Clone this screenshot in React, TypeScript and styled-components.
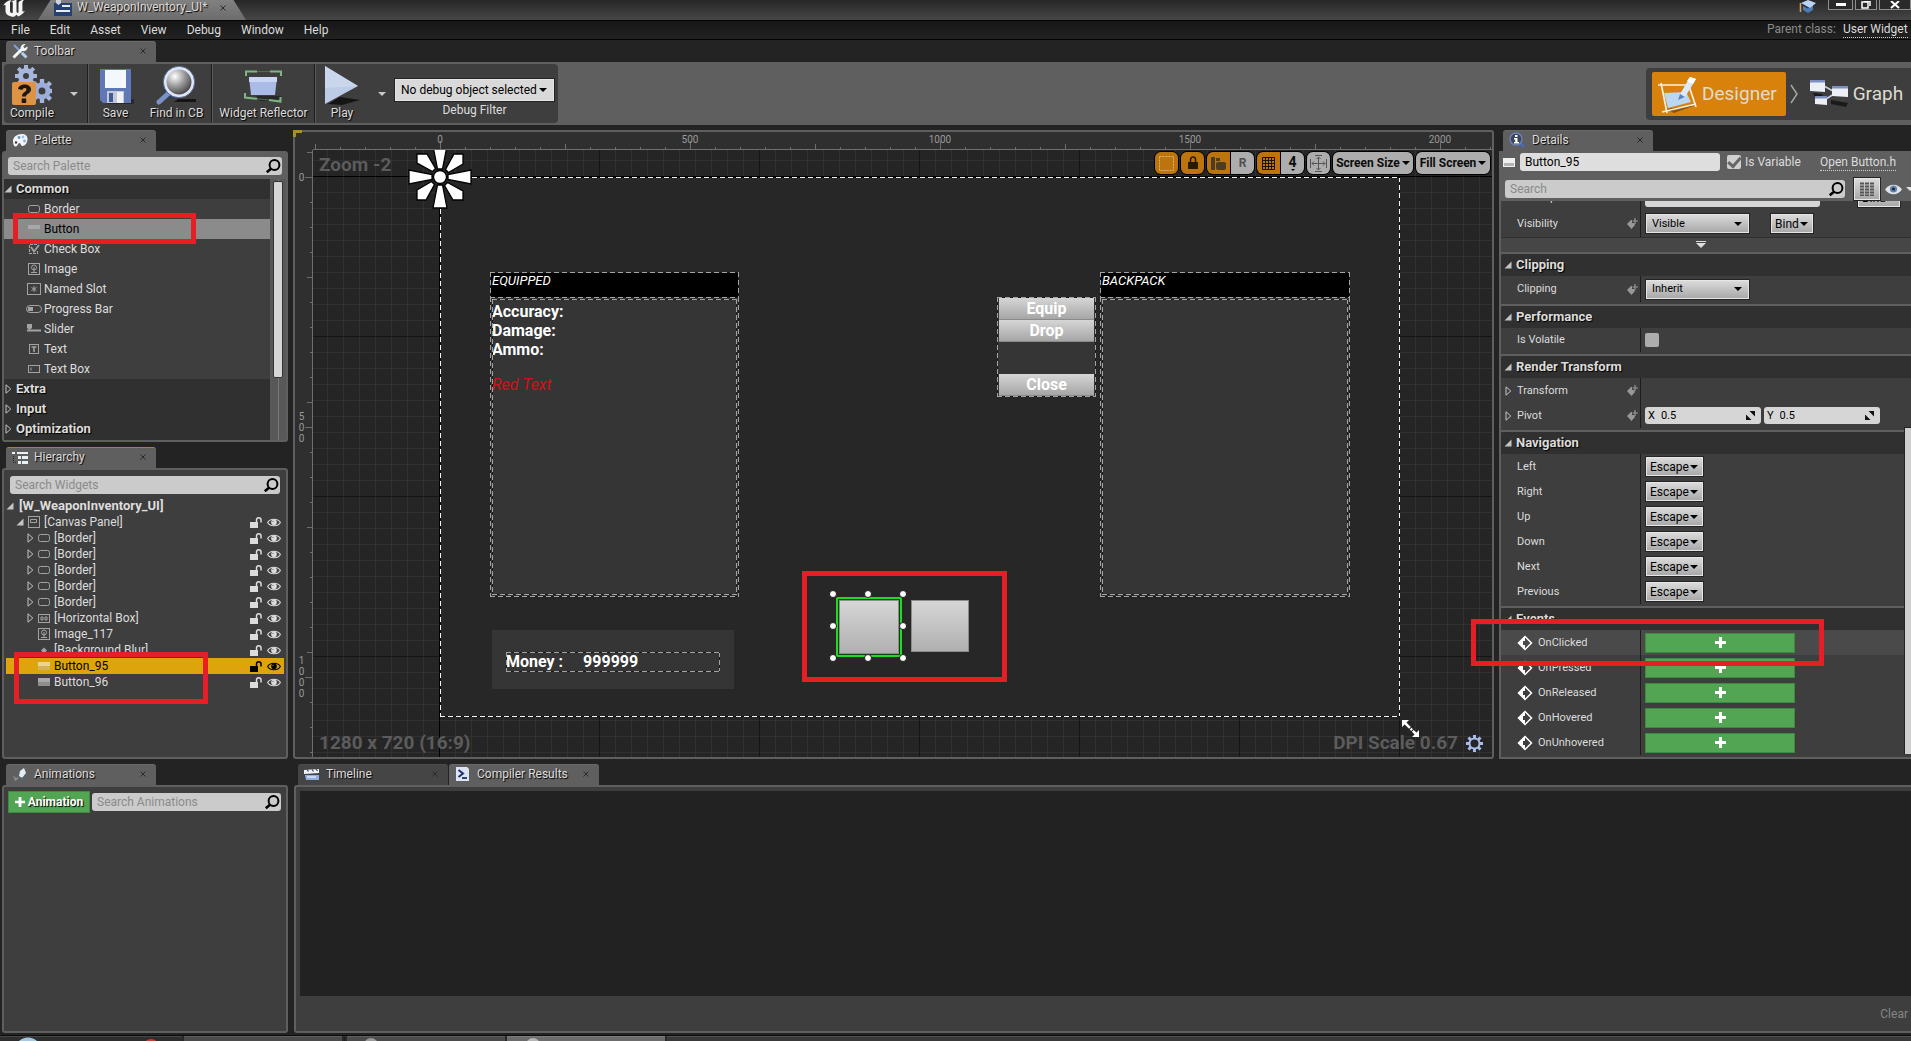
import React from "react";
import styled, { createGlobalStyle, css } from "styled-components";

/* ---------- theme values ---------- */

const c = {
  back: "#232323",
  frame: "#5f5f5f",
  panel: "#3e3e3e",
  header: "#303030",
  text: "#dcdcdc",
  dim: "#8c8c8c",
  input: "#cbcbcb",
  green: "#52a653",
  orange: "#d9820b",
  select: "#dda40c",
  mark: "#e61e25",
};

const Global = createGlobalStyle`
  * { box-sizing: border-box; }
  html, body { margin: 0; height: 100%; background: ${c.back}; }
  body, button, input, select {
    font-family: Roboto, "Liberation Sans", sans-serif;
    font-size: 12px;
    line-height: 16px;
    color: ${c.text};
  }
  button, input, select { margin: 0; padding: 0; border: 0; background: none; border-radius: 0; }
  ul { list-style: none; margin: 0; padding: 0; }
  h2 { margin: 0; font-size: inherit; }
  svg { display: block; flex: none; }
`;

const shadow = css`text-shadow: 1px 1px 1px #000;`;
const raised = css`
  background: linear-gradient(#dadada, #a9a9a9);
  border: 1px solid #e6e6e6;
  box-shadow: 0 0 0 1px #242424;
  color: #000;
`;

/* ---------- shell ---------- */

const Shell = styled.div`
  display: flex;
  flex-direction: column;
  height: 100vh;
  overflow: hidden;
  background: ${c.back};
`;

const TitleBar = styled.header`
  display: flex;
  justify-content: space-between;
  flex: none;
  height: 21px;
  padding-left: 2px;
  background: linear-gradient(#272727, #464646);
  border-bottom: 1px solid #050505;
`;

const TitleLeft = styled.div`
  display: flex;
  gap: 12px;
`;

const DocTab = styled.div`
  display: flex;
  align-items: flex-start;
  gap: 5px;
  width: 208px;
  height: 20px;
  padding: 0 18px 0 16px;
  background: linear-gradient(#818181, #6c6c6c);
  clip-path: polygon(6% 0, 94% 0, 100% 100%, 0 100%);
  line-height: 14px;
  ${shadow}
  span { flex: 1; }
`;

const WindowControls = styled.div`
  display: flex;
  align-items: flex-start;
  gap: 2px;
`;

const WinButton = styled.button<{ $w: number }>`
  display: grid;
  place-items: center;
  width: ${(p) => p.$w}px;
  height: 10px;
  background: #2a2a2a;
  border: 1px solid #8f8f8f;
  border-top: 0;
`;

const CapIcon = styled.span`margin-right: 10px;`;

const MenuBar = styled.nav`
  display: flex;
  align-items: center;
  flex: none;
  height: 19px;
  padding-left: 1px;
  background: linear-gradient(#161616, #222);
  border-bottom: 1px solid #050505;
`;

const MenuItem = styled.button`
  padding: 0 10px;
  height: 18px;
`;

const ParentClass = styled.div`
  display: flex;
  gap: 7px;
  margin-left: auto;
  width: 144px;
  overflow: hidden;
  white-space: nowrap;
  color: ${c.dim};
  line-height: 15px;
`;

const DottedLink = styled.a`
  color: ${c.text};
  text-decoration: none;
  border-bottom: 1px dotted #d0d0d0;
  white-space: nowrap;
`;

/* ---------- tabs and panels ---------- */

const TabStrip = styled.div`
  display: flex;
  gap: 1px;
  height: 21px;
  flex: none;
  padding-left: 4px;
`;

const Tab = styled.div<{ $idle?: boolean; $focus?: boolean }>`
  display: flex;
  align-items: center;
  gap: 6px;
  width: 150px;
  padding: 0 8px 2px 6px;
  background: ${(p) => (p.$idle ? "#454545" : c.frame)};
  border-top: 1px solid ${(p) => (p.$focus ? "#a08a28" : p.$idle ? "#4c4c4c" : "#696969")};
  border-radius: 3px 3px 0 0;
  ${shadow}
  span { flex: 1; }
`;

const CloseButton = styled.button`
  width: 10px;
  height: 16px;
  display: grid;
  place-items: center;
`;

const Panel = styled.section<{ $h?: number }>`
  position: relative;
  display: flex;
  flex-direction: column;
  ${(p) => (p.$h ? `height: ${p.$h}px; flex: none;` : "flex: 1; min-height: 0;")}
`;

const PanelBody = styled.div<{ $pad?: string }>`
  display: flex;
  flex-direction: column;
  flex: 1;
  min-height: 0;
  background: ${c.panel};
  border: 2px solid ${c.frame};
  border-radius: 3px;
  padding: ${(p) => p.$pad ?? "0"};
`;

const Marker = styled.div<{ $x: number; $y: number; $w: number; $h: number }>`
  position: absolute;
  left: ${(p) => p.$x}px;
  top: ${(p) => p.$y}px;
  width: ${(p) => p.$w}px;
  height: ${(p) => p.$h}px;
  border: 5px solid ${c.mark};
  pointer-events: none;
  z-index: 5;
`;

/* ---------- toolbar ---------- */

const ToolbarArea = styled.div`
  flex: none;
  padding: 1px 0 5px 2px;
`;

const ToolbarBar = styled.div`
  display: flex;
  justify-content: space-between;
  height: 63px;
  padding: 2px 0 2px 2px;
  background: ${c.frame};
`;

const ToolGroup = styled.div`
  display: flex;
  background: ${c.panel};
  border-radius: 4px;
`;

const ToolDivider = styled.div`
  width: 2px;
  background: #5a5a5a;
  border-left: 1px solid #1e1e1e;
`;

const ToolButton = styled.button<{ $w: number }>`
  display: flex;
  flex-direction: column;
  align-items: center;
  width: ${(p) => p.$w}px;
  padding-top: 1px;
  white-space: nowrap;
  ${shadow}
`;

const CaretButton = styled.button`
  width: 27px;
  display: grid;
  place-items: center;
`;

const DebugFilter = styled.div`
  display: flex;
  flex-direction: column;
  align-items: center;
  gap: 1px;
  width: 163px;
  padding: 15px 4px 0 0;
`;

const SelectBox = styled.span<{ $w?: number; $h: number; $flat?: boolean; $small?: boolean }>`
  position: relative;
  display: block;
  width: ${(p) => (p.$w ? `${p.$w}px` : "100%")};
  height: ${(p) => p.$h}px;
  ${raised}
  ${(p) => p.$flat && "background: #d9d9d9;"}
  select {
    width: 100%;
    height: 100%;
    padding-left: 5px;
    appearance: none;
    color: #000;
    font-size: ${(p) => (p.$small ? 11 : 12)}px;
  }
  svg { position: absolute; right: 6px; top: 50%; margin-top: -2px; pointer-events: none; }
`;

const Modes = styled.div`
  display: flex;
  align-items: center;
  gap: 4px;
  width: 265px;
  height: 52px;
  margin: 4px 0;
  padding-left: 6px;
  background: ${c.panel};
  border-radius: 4px 0 0 4px;
`;

const ModeButton = styled.button<{ $on?: boolean }>`
  display: flex;
  align-items: center;
  gap: 4px;
  height: 44px;
  padding: 0 9px 0 6px;
  border-radius: 2px;
  background: ${(p) => (p.$on ? c.orange : "none")};
  font-size: 19px;
  line-height: 24px;
  color: #dedbd2;
`;

/* ---------- workspace ---------- */

const Workspace = styled.main`
  display: grid;
  grid-template-columns: 286px minmax(0, 1fr) 412px;
  grid-template-rows: minmax(0, 1fr);
  gap: 5px;
  flex: 1;
  min-height: 0;
  padding-left: 2px;
`;

const Column = styled.div`
  display: flex;
  flex-direction: column;
  gap: 5px;
  min-height: 0;
`;

const SearchField = styled.label<{ $m?: string }>`
  display: flex;
  align-items: center;
  flex: 1;
  height: 18px;
  min-height: 18px;
  max-height: 18px;
  margin: ${(p) => p.$m ?? "0"};
  padding: 0 1px 0 5px;
  background: ${c.input};
  border-radius: 3px;
  input { flex: 1; min-width: 0; height: 18px; color: #222; outline: none; }
  input::placeholder { color: #8a8a8a; opacity: 1; }
`;

const PaletteTop = styled.div`
  display: flex;
  padding: 4px;
  background: ${c.frame};
`;

const PaletteScroll = styled.div`
  display: flex;
  flex: 1;
  min-height: 0;
`;

const PaletteList = styled.ul`
  flex: 1;
  background: ${c.header};
`;

const Gutter = styled.div`
  width: 16px;
  padding: 2px 3px;
  background: linear-gradient(90deg, transparent 8px, #787878 8px 9px, transparent 9px) #585858;
`;

const Thumb = styled.div<{ $h: number }>`
  height: ${(p) => p.$h}px;
  border-radius: 2px;
  background: #d6d6d6;
  border: 1px solid #333;
`;

const PaletteHead = styled.button`
  display: flex;
  align-items: center;
  gap: 4px;
  width: 100%;
  height: 20px;
  font-size: 13px;
  font-weight: 700;
  ${shadow}
`;

const PaletteItem = styled.button<{ $on?: boolean }>`
  display: flex;
  align-items: center;
  gap: 2px;
  width: 100%;
  height: 20px;
  padding-left: 22px;
  background: ${(p) => (p.$on ? "#8b8b8b" : c.panel)};
  color: ${(p) => (p.$on ? "#000" : c.text)};
`;

const TreeRow = styled.li<{ $indent: number; $on?: boolean; $root?: boolean }>`
  display: flex;
  align-items: center;
  gap: ${(p) => (p.$root ? 5 : 2)}px;
  height: 16px;
  margin: 0 2px;
  padding: 0 2px 0 ${(p) => p.$indent}px;
  background: ${(p) => (p.$on ? c.select : "none")};
  color: ${(p) => (p.$on ? "#000" : c.text)};
  font-size: ${(p) => (p.$root ? 13 : 12)}px;
  font-weight: ${(p) => (p.$root ? 700 : 400)};
`;

const TreeLabel = styled.span`flex: 1; white-space: nowrap;`;

const IconButton = styled.button`
  display: grid;
  place-items: center;
  width: 16px;
  height: 16px;
  color: inherit;
`;

/* ---------- canvas ---------- */

const CanvasPanel = styled.div`
  position: relative;
  display: grid;
  grid-template-columns: 18px minmax(0, 1fr);
  grid-template-rows: 18px minmax(0, 1fr);
  background: #2f2f2f;
  border: 2px solid ${c.frame};
  border-radius: 3px;
`;

const FocusCorner = styled.div`
  position: absolute;
  left: -2px;
  top: -2px;
  width: 9px;
  height: 7px;
  border-top: 3px solid #a98f2c;
  border-left: 3px solid #a98f2c;
`;

const TopRuler = styled.div`
  position: relative;
  grid-column: 2;
  overflow: hidden;
  border-bottom: 1px solid #6e6e6e;
  background-image:
    repeating-linear-gradient(90deg, #6e6e6e 0 1px, transparent 1px 25px),
    repeating-linear-gradient(90deg, #6e6e6e 0 1px, transparent 1px 125px),
    repeating-linear-gradient(90deg, #6e6e6e 0 1px, transparent 1px 250px);
  background-size: 250px 2px, 250px 5px, 250px 8px;
  background-position: 2px 100%, 2px 100%, 127px 100%;
  background-repeat: repeat-x;
`;

const LeftRuler = styled.div`
  position: relative;
  overflow: hidden;
  border-right: 1px solid #6e6e6e;
  background-image:
    repeating-linear-gradient(#6e6e6e 0 1px, transparent 1px 25px),
    repeating-linear-gradient(#6e6e6e 0 1px, transparent 1px 125px),
    repeating-linear-gradient(#6e6e6e 0 1px, transparent 1px 250px);
  background-size: 2px 250px, 5px 250px, 7px 250px;
  background-position: 100% 2px, 100% 2px, 100% 27px;
  background-repeat: repeat-y;
`;

const TopMark = styled.span<{ $at: number }>`
  position: absolute;
  left: ${(p) => p.$at - 20}px;
  top: 2px;
  width: 40px;
  text-align: center;
  font-size: 10px;
  line-height: 11px;
  color: #9a9a9a;
`;

const SideMark = styled.span<{ $at: number }>`
  position: absolute;
  left: 3px;
  top: ${(p) => p.$at - 30}px;
  height: 60px;
  width: 7px;
  display: flex;
  flex-direction: column;
  justify-content: center;
  align-items: center;
  font-size: 10px;
  line-height: 11px;
  color: #9a9a9a;
`;

const Viewport = styled.div`
  position: relative;
  overflow: hidden;
  background-color: #252525;
  background-image:
    linear-gradient(#000, #000),
    linear-gradient(#000, #000),
    linear-gradient(90deg, #151515 1px, transparent 1px),
    linear-gradient(#151515 1px, transparent 1px),
    linear-gradient(90deg, #313131 1px, transparent 1px),
    linear-gradient(#313131 1px, transparent 1px);
  background-size: 1px 100%, 100% 1px, 160px 160px, 160px 160px, 16px 16px, 16px 16px;
  background-position: 126px 0, 0 26px, 126px 26px, 126px 26px, 126px 26px, 126px 26px;
  background-repeat: no-repeat, no-repeat, repeat, repeat, repeat, repeat;
`;

const HudText = styled.div<{ $left?: number; $right?: number; $top?: number; $bottom?: number }>`
  position: absolute;
  ${(p) => (p.$left !== undefined ? `left: ${p.$left}px;` : "")}
  ${(p) => (p.$right !== undefined ? `right: ${p.$right}px;` : "")}
  ${(p) => (p.$top !== undefined ? `top: ${p.$top}px;` : "")}
  ${(p) => (p.$bottom !== undefined ? `bottom: ${p.$bottom}px;` : "")}
  display: flex;
  align-items: center;
  gap: 8px;
  font-size: 19px;
  line-height: 24px;
  font-weight: 700;
  color: #5c5c5c;
`;

const CanvasTools = styled.div`
  position: absolute;
  top: 1px;
  right: 1px;
  display: flex;
  gap: 1px;
`;

const ToolPill = styled.div`
  display: flex;
  height: 24px;
  border: 1px solid #000;
  border-radius: 7px;
  overflow: hidden;
  background: #000;
  gap: 1px;
`;

const PillButton = styled.button<{ $on?: boolean; $w?: number; $dim?: boolean }>`
  display: flex;
  align-items: center;
  justify-content: center;
  gap: 2px;
  height: 22px;
  width: ${(p) => p.$w ?? 23}px;
  background: ${(p) => (p.$on ? "#bb750c" : "#adadad")};
  color: ${(p) => (p.$dim ? "#505050" : "#0c0c0c")};
  font-weight: 700;
  white-space: nowrap;
`;

const Stacked = styled(PillButton)`
  flex-direction: column;
  gap: 0;
  line-height: 14px;
  font-size: 14px;
`;

const dashed = (on: string, off: string) => css`
  &::after {
    content: "";
    position: absolute;
    inset: 0;
    pointer-events: none;
    background:
      repeating-linear-gradient(90deg, ${on} 0 5px, ${off} 5px 8px) 0 0 / 100% 1px no-repeat,
      repeating-linear-gradient(90deg, ${on} 0 5px, ${off} 5px 8px) 0 100% / 100% 1px no-repeat,
      repeating-linear-gradient(${on} 0 5px, ${off} 5px 8px) 0 0 / 1px 100% no-repeat,
      repeating-linear-gradient(${on} 0 5px, ${off} 5px 8px) 100% 0 / 1px 100% no-repeat;
  }
`;

const Design = styled.div`
  position: absolute;
  left: 127px;
  top: 27px;
  width: 960px;
  height: 540px;
  background-color: #272727;
  box-shadow: inset 0 0 12px rgba(255, 255, 255, 0.03);
  ${dashed("#f4f4f4", "#111")}
`;

const Placed = styled.div<{ $x: number; $y: number; $w: number; $h: number; $fill?: string; $dash?: boolean }>`
  position: absolute;
  left: ${(p) => p.$x}px;
  top: ${(p) => p.$y}px;
  width: ${(p) => p.$w}px;
  height: ${(p) => p.$h}px;
  background: ${(p) => p.$fill ?? "none"};
  ${(p) => p.$dash && dashed("#a2a2a2", "#1b1b1b")}
`;

const InnerDash = styled.div`
  position: absolute;
  inset: 2px;
  padding-top: 3px;
  ${dashed("#a2a2a2", "#1b1b1b")}
`;

const SlotTitle = styled.div`
  padding: 1px 0 0 2px;
  font-style: italic;
  font-size: 13px;
  color: #fff;
`;

const GameText = styled.div`
  font-size: 16px;
  line-height: 19px;
  font-weight: 700;
  color: #fff;
  white-space: nowrap;
`;

const RedText = styled(GameText)`
  margin-top: 16px;
  font-weight: 400;
  font-style: italic;
  color: #d01217;
`;

const GameButtons = styled.div`
  position: absolute;
  inset: 1px 2px;
  display: flex;
  flex-direction: column;
`;

const GameButton = styled.button<{ $last?: boolean }>`
  height: 22px;
  width: 100%;
  background: linear-gradient(#d6d6d6, #a6a6a6);
  border-bottom: 1px solid #8a8a8a;
  font-size: 16px;
  line-height: 19px;
  font-weight: 700;
  color: #fff;
  ${(p) => p.$last && "margin-top: auto;"}
`;

const MoneyRow = styled.div`
  display: flex;
  gap: 20px;
`;

const GreyButton = styled.button`
  display: block;
  width: 100%;
  height: 100%;
  background: linear-gradient(#d6d6d6, #b0b0b0);
  border: 1px solid #8c8c8c;
`;

const Selected = styled(Placed)`
  border: 2px solid #1fdc22;
  border-radius: 2px;
  padding: 1px;
  box-shadow: inset 0 0 0 1px #123c12;
`;

const Handle = styled.i<{ $x: number; $y: number }>`
  position: absolute;
  left: ${(p) => p.$x - 4}px;
  top: ${(p) => p.$y - 4}px;
  width: 8px;
  height: 8px;
  border-radius: 50%;
  background: #fff;
  border: 1px solid #1a1a1a;
  z-index: 2;
`;

const Floating = styled.div<{ $x: number; $y: number }>`
  position: absolute;
  left: ${(p) => p.$x}px;
  top: ${(p) => p.$y}px;
  z-index: 2;
`;

/* ---------- details ---------- */

const DetailsBody = styled.div`
  display: flex;
  flex-direction: column;
  flex: 1;
  min-height: 0;
  background: ${c.frame};
  padding-left: 2px;
  border-bottom: 2px solid ${c.frame};
`;

const NameRow = styled.div`
  display: flex;
  align-items: center;
  flex: none;
  gap: 5px;
  height: 22px;
  padding-left: 2px;
`;

const NameInput = styled.input`
  width: 200px;
  height: 18px;
  padding-left: 5px;
  border-radius: 3px;
  background: #dedede;
  color: #000;
`;

const CheckLabel = styled.label`
  display: flex;
  align-items: center;
  gap: 4px;
  width: 88px;
  margin-left: 2px;
`;

const Check = styled.input`
  appearance: none;
  width: 14px;
  height: 14px;
  border-radius: 2px;
  background: #adadad;
  display: grid;
  place-items: center;
  &:checked { background: #d0d0d0; }
  &:checked::before {
    content: "";
    width: 10px;
    height: 5px;
    margin-top: -3px;
    border: solid #666;
    border-width: 0 0 3px 3px;
    transform: rotate(-48deg);
  }
`;

const SearchRow = styled.div`
  display: flex;
  align-items: center;
  flex: none;
  height: 28px;
  gap: 4px;
  padding: 4px 0 0 4px;
`;

const MatrixButton = styled.button`
  ${raised}
  display: grid;
  place-items: center;
  width: 26px;
  height: 22px;
  margin: 0 1px 0 5px;
`;

const EyeMenu = styled.button`
  display: flex;
  align-items: center;
  gap: 4px;
  width: 26px;
`;

const DetailsScroll = styled.div`
  position: relative;
  flex: 1;
  min-height: 0;
  overflow: hidden;
  background: ${c.panel};
`;

const Category = styled.section<{ $flush?: boolean }>`
  border-bottom: 2px solid ${c.frame};
  padding-bottom: ${(p) => (p.$flush ? 0 : 2)}px;
  &:last-of-type { border-bottom: 0; }
`;

const CategoryHead = styled.h2`
  display: flex;
  align-items: center;
  gap: 4px;
  height: 22px;
  padding-left: 3px;
  background: ${c.header};
  border-radius: 3px 0 0 0;
  font-size: 13px;
  font-weight: 700;
  ${shadow}
`;

const PropRow = styled.div<{ $h?: number; $on?: boolean }>`
  display: grid;
  grid-template-columns: 140px 1fr;
  flex: none;
  height: ${(p) => p.$h ?? 25}px;
  background: ${(p) => (p.$on ? "#4a4a4a" : "none")};
  font-size: 11px;
`;

const PropName = styled.div`
  display: flex;
  align-items: center;
  gap: 5px;
  padding: 0 2px 0 3px;
  border-right: 1px solid #1c1c1c;
  i { width: 8px; }
  label, span { flex: 1; white-space: nowrap; }
`;

const PropValue = styled.div`
  display: flex;
  align-items: center;
  gap: 3px;
  padding-left: 4px;
  ${SelectBox} { margin-left: 1px; }
`;

const ClippedRow = styled.div`
  display: flex;
  flex-direction: column;
  justify-content: flex-end;
  height: 9px;
  overflow: hidden;
`;

const TextField = styled.input<{ $w: number }>`
  width: ${(p) => p.$w}px;
  height: 18px;
  border-radius: 3px;
  background: #d6d6d6;
  color: #000;
`;

const DropButton = styled.button<{ $m?: number }>`
  ${raised}
  display: flex;
  align-items: center;
  gap: 1px;
  height: 19px;
  padding: 0 4px 0 3px;
  margin-left: ${(p) => p.$m ?? 1}px;
`;

const Advanced = styled.button`
  display: grid;
  place-items: center;
  width: 100%;
  height: 15px;
  padding-right: 10px;
  background: #464646;
  border-top: 1px solid #303030;
`;

const Vector = styled.label`
  display: flex;
  align-items: center;
  gap: 6px;
  width: 116px;
  height: 17px;
  padding: 0 6px 0 3px;
  border-radius: 3px;
  background: #d6d6d6;
  color: #000;
  input { flex: 1; min-width: 0; color: #000; font-size: 11px; }
`;

const EventName = styled(PropName)`
  padding-left: 16px;
`;

const GreenButton = styled.button<{ $w: number; $h: number }>`
  display: flex;
  align-items: center;
  justify-content: center;
  gap: 3px;
  width: ${(p) => p.$w}px;
  height: ${(p) => p.$h}px;
  background: ${c.green};
  border: 1px solid #3f8a41;
  color: #fff;
  font-weight: 700;
  ${shadow}
`;

const DetailsThumb = styled.div`
  position: absolute;
  right: 0;
  top: 226px;
  bottom: 3px;
  width: 7px;
  background: #cfcfcf;
  border-left: 1px solid #222;
  border-top: 1px solid #222;
`;

/* ---------- bottom ---------- */

const Bottom = styled.div`
  display: grid;
  grid-template-columns: 286px minmax(0, 1fr);
  gap: 6px;
  flex: none;
  height: 269px;
  margin-top: 5px;
  padding-left: 2px;
`;

const AnimBar = styled.div`
  display: flex;
  align-items: center;
  gap: 2px;
  height: 22px;
`;

const LogPanel = styled(PanelBody)`
  border-right: 0;
  border-radius: 3px 0 0 3px;
`;

const Log = styled.div`
  flex: 1;
  background: #222;
`;

const LogFooter = styled.div`
  display: flex;
  justify-content: flex-end;
  align-items: center;
  height: 35px;
  padding-right: 3px;
  button { color: #858585; }
`;

const TaskBar = styled.footer`
  display: grid;
  grid-template-columns: 182px 158px 1px 158px 158px 1fr;
  gap: 2px;
  flex: none;
  height: 6px;
  margin-top: 2px;
  border-top: 1px solid #0c0c0c;
  background: #2a2a2a;
  overflow: hidden;
`;

const Task = styled.div<{ $bg: string }>`
  background: ${(p) => p.$bg};
  border-top: 1px solid rgba(255, 255, 255, 0.12);
  display: flex;
`;

/* ---------- icons ---------- */

const Caret = ({ w = 8, fill = "#000" }: { w?: number; fill?: string }) => (
  <svg width={w} height={w / 2} viewBox="0 0 8 4"><path d="M0 0h8L4 4z" fill={fill} /></svg>
);

const OpenArrow = () => (
  <svg width="8" height="8" viewBox="0 0 8 8"><path d="M7.500 0.500v7h-7z" fill="#c4c4c4" /></svg>
);

const ShutArrow = () => (
  <svg width="8" height="10" viewBox="0 0 8 10"><path d="M2 .8v8.400L6.800 5z" fill="none" stroke="#c4c4c4" /></svg>
);

const XIcon = () => (
  <svg width="6" height="6" viewBox="0 0 6 6"><path d="M.5.5l5 5M5.500.5l-5 5" stroke="#2a2a2a" strokeWidth="1" /></svg>
);

const Magnifier = () => (
  <svg width="16" height="16" viewBox="0 0 16 16" fill="none" stroke="#000">
    <circle cx="9.500" cy="7" r="4.900" strokeWidth="2" /><path d="M6 10.700L1.800 14.300" strokeWidth="2.600" />
  </svg>
);

const Plus = ({ s = 11 }: { s?: number }) => (
  <svg width={s} height={s} viewBox="0 0 11 11"><path d="M4 0h3v4h4v3H7v4H4V7H0V4h4z" fill="#fff" /></svg>
);

const Unreal = () => (
  <svg width="24" height="17" viewBox="0 0 24 17">
    <path d="M1 6C3 2.500 6 0 9.500 0C8 1.500 8 3 8 5v6c0 1.600 1.400 2.400 2.800 1.700V3.200c0-1.300-.9-1.700-1.600-1.900C11 .6 13 0 14.500 0v11.500c0 1 .9 1.600 2 1.100V3c0-1.500 1.500-2 3.500-3h2c-1.300 1.200-1.600 2-1.600 3.500v7.800c.9.600 1.700.2 2.600-.5C21 14.200 18 15.800 16.300 16.500l-1.800-1.700-2.300 1.900C8 17 3.500 14.800 3.500 11V5.500C3.300 4.800 2 5 1 6z" fill="#f5f5f5" />
  </svg>
);

const WidgetDoc = () => (
  <svg width="18" height="17" viewBox="0 0 18 17">
    <path d="M0 3h18v13H0z" fill="#26406f" /><path d="M2 0h5v3l-2.500 2L2 3z" fill="#cfd4dc" />
    <path d="M8 5h8v2H8zM2 10h14v2H2z" fill="#e7ebf2" />
  </svg>
);

const GradCap = () => (
  <svg width="17" height="13" viewBox="0 0 17 13">
    <path d="M4 6l5 2.500L14 5v5l-5 3-5-3z" fill="#4d7bb6" /><path d="M2 3L9 0l8 3-6 5z" fill="#b9d3f2" />
    <path d="M1.500 3v9" stroke="#c9a468" strokeWidth="1.600" />
  </svg>
);

const Wrench = () => (
  <svg width="16" height="16" viewBox="0 0 16 16" fill="none">
    <path d="M2 2l12 12" stroke="#7ca3dc" strokeWidth="2" /><path d="M10 10l4.500 4.500" stroke="#b7cdec" strokeWidth="3" />
    <path d="M1.500 14.500L9.500 6.500" stroke="#f4f4f4" strokeWidth="3" />
    <path d="M9 7.500C7.500 4 10 .5 13.500 1.200L11.300 3.600l1.200 1.700 3-1.700C16 7 13 9.500 9 7.500z" fill="#f4f4f4" />
  </svg>
);

const PaletteIcon = () => (
  <svg width="16" height="15" viewBox="0 0 16 15">
    <path d="M1 8C1 4 5 1 10 1c3.500 0 5.500 2 5.500 5 0 4-2.500 7-5 7-2 0-1.500-3-3-3S5.500 14 3 13.500C1.500 13 1 10 1 8z" fill="#f2f5f9" />
    <circle cx="4" cy="9.500" r="1.200" fill="#3a3a3a" /><circle cx="7" cy="4.500" r="1.400" fill="#6d92cc" />
    <circle cx="11" cy="4" r="1.400" fill="#9cc3e6" /><circle cx="12.500" cy="8" r="1.400" fill="#86aee0" />
  </svg>
);

const HierarchyIcon = () => (
  <svg width="16" height="13" viewBox="0 0 16 13">
    <path d="M0 1h3v2H0zM5 1h11v2H5zM6 5h3v3H6zM10 5h6v3h-6zM6 10h3v3H6zM10 10h6v3h-6z" fill="#e9f1f5" />
    <path d="M1.500 5v6.500H5" stroke="#222" strokeDasharray="1 1" fill="none" />
  </svg>
);

const InfoIcon = () => (
  <svg width="17" height="16" viewBox="0 0 17 16">
    <path d="M10 10l5 5" stroke="#4b68b5" strokeWidth="3" /><circle cx="7" cy="7" r="6" fill="#3c4656" stroke="#6b83bd" strokeWidth="1.400" />
    <path d="M6 3h2.500v2H6zM5 6h3.500v4H10v1.500H5V10h1.200V7.500H5z" fill="#fff" />
  </svg>
);

const KeyIcon = () => (
  <svg width="16" height="15" viewBox="0 0 16 15">
    <path d="M8 4l4-3 2 5-4 5-3-2z" fill="#e2eef5" /><path d="M1 8l3 3 3-1-2 3-2 1z" fill="#8d8d8d" /><path d="M9 11l2 2" stroke="#4c6c86" strokeWidth="2" />
  </svg>
);

const ClipIcon = () => (
  <svg width="16" height="13" viewBox="0 0 16 13">
    <path d="M0 2l15-1v4L0 6z" fill="#eef3fa" /><path d="M1 7h14v5H2z" fill="#8fb0df" />
    <path d="M3 1.500l1.500 2M8 1.500l1.500 2M12 1l1.500 2" stroke="#33435f" strokeWidth="1.200" /><path d="M3 9h9" stroke="#fff" />
  </svg>
);

const CompilerIcon = () => (
  <svg width="16" height="16" viewBox="0 0 16 16">
    <path d="M1 1h11l2 2v12H1z" fill="#dde5f5" /><path d="M3.500 4l4.500 3.500L3.500 11" fill="none" stroke="#1d3266" strokeWidth="2" /><path d="M7 12h5" stroke="#1d3266" strokeWidth="1.800" />
  </svg>
);

const teeth = (cx: number, cy: number, r: number, n: number) =>
  Array.from({ length: n }, (_, i) => (
    <rect key={i} x={cx - r * 0.18} y={cy - r} width={r * 0.36} height={r * 0.5} transform={`rotate(${(360 / n) * i} ${cx} ${cy})`} />
  ));

const CompileIcon = () => (
  <svg width="40" height="40" viewBox="0 0 40 40">
    <g fill="#a6b6dc">
      {teeth(14, 11, 11, 8)}{teeth(30, 26, 12, 8)}
      <circle cx="14" cy="11" r="5.500" fill="none" stroke="#a6b6dc" strokeWidth="5" />
      <circle cx="30" cy="26" r="6" fill="none" stroke="#9badd8" strokeWidth="5" />
    </g>
    <rect x="0" y="17" width="24" height="23" rx="2" fill="#dd9345" />
    <path d="M6 24c1-6 13-6 13 .5 0 4-5 4-5 7h-4c0-4.500 4.500-4.500 4.500-7 0-2.300-3.800-2-4.300.6zM9.700 33.500h4.500V38H9.700z" fill="#1b1713" />
  </svg>
);

const SaveIcon = () => (
  <svg width="36" height="40" viewBox="0 0 36 40">
    <path d="M6 34h30v5H10z" fill="#1c1c1c" opacity=".6" />
    <path d="M2 4h31v34H5l-3-3z" fill="#6079b6" /><path d="M7 5h21v18H7z" fill="#f4f7fb" />
    <path d="M9 26h17v12H9z" fill="#c3cad6" /><path d="M11 28h4v9h-4z" fill="#435a94" /><path d="M19 27h6v11h-6z" fill="#eef1f6" />
  </svg>
);

const FindIcon = () => (
  <svg width="42" height="40" viewBox="0 0 42 40">
    <defs><radialGradient id="lens" cx=".35" cy=".3" r=".8"><stop offset="0" stopColor="#fff" /><stop offset=".45" stopColor="#999" /><stop offset="1" stopColor="#2a2a2a" /></radialGradient></defs>
    <path d="M8 13h14v20H8z" fill="#2c3c5e" /><path d="M22 34h18v3H18z" fill="#151515" />
    <path d="M14 27L3 37" stroke="#7a92c8" strokeWidth="5" strokeLinecap="round" />
    <circle cx="23" cy="17" r="14" fill="url(#lens)" stroke="#dfe7f6" strokeWidth="3" />
    <circle cx="23" cy="17" r="15.700" fill="none" stroke="#5d6f9c" />
  </svg>
);

const ReflectorIcon = () => (
  <svg width="40" height="40" viewBox="0 0 40 40">
    <path d="M12 31h26l-6 5H16z" fill="#1b1b1b" opacity=".6" />
    <path d="M5 12h28l-2 18H7z" fill="#a9bbe6" /><path d="M5 12h28v5H5z" fill="#cad7f4" />
    <path d="M2 11V6.500h11M26 6.500h11V11M1 28v4.500l12 1.300M25 35l11.500 1.500V32" fill="none" stroke="#7fb583" strokeWidth="2" />
    <path d="M13 6.500h13M13 33.800l12 1.200" stroke="#4c6f4f" />
  </svg>
);

const PlayIcon = () => (
  <svg width="36" height="40" viewBox="0 0 36 40">
    <path d="M4 39l12-7 20 3-18 5z" fill="#151515" /><path d="M1 1l33 20L1 39z" fill="#bccbe6" /><path d="M1 1l33 20-33 2z" fill="#d4def0" opacity=".6" />
  </svg>
);

const DesignerIcon = () => (
  <svg width="40" height="40" viewBox="0 0 40 40">
    <path d="M8 35l30-4-22 8z" fill="#6b430c" opacity=".7" />
    <path d="M0 11l32 0M4 38l34-8M3 9l6 30M30 9l8 24" stroke="#f6efe2" strokeWidth="1.700" fill="none" />
    <path d="M6 19l22-1 5 10-23 6z" fill="#bcd7f2" /><path d="M21 22L32 3l6 2-11 18-7 3z" fill="#dbe9f8" /><path d="M32 3l6 2-3 5-6-3z" fill="#fff" />
    <path d="M22 20l5 3-7 3z" fill="#5a83bb" />
  </svg>
);

const GraphIcon = () => (
  <svg width="40" height="30" viewBox="0 0 40 30">
    <path d="M4 14l9 1 2 4-9-1zM22 21l17 3-2 4-15-3z" fill="#1a1a1a" />
    <path d="M15 7l9 5M17 20l8-5" stroke="#c9d0dd" strokeWidth="1.500" />
    <path d="M1 1h15v12L1 12z" fill="#eceff5" /><path d="M1 1h15v2.500H1z" fill="#7c90c0" />
    <path d="M23 7h16v11l-16-1z" fill="#eceff5" /><path d="M23 7h16v2.500H23z" fill="#7c90c0" />
    <path d="M6 17h12v9l-12-1z" fill="#eceff5" /><path d="M6 17h12v2.500H6z" fill="#7c90c0" />
  </svg>
);

const Lock = () => (
  <svg width="14" height="11" viewBox="0 0 14 11">
    <path d="M1 5h8v6H1z" fill="currentColor" /><path d="M7.500 5.500V3a2.200 2.200 0 014.500 0v2.500" fill="none" stroke="currentColor" strokeWidth="1.500" />
  </svg>
);

const Eye = () => (
  <svg width="14" height="9" viewBox="0 0 14 9">
    <path d="M.6 4.500C3 .2 11 .2 13.400 4.500 11 8.800 3 8.800.6 4.500z" fill="none" stroke="currentColor" strokeWidth="1.100" />
    <circle cx="7" cy="4.200" r="2.800" fill="currentColor" /><circle cx="6" cy="3.400" r=".7" fill="#777" />
  </svg>
);

const Tag = () => (
  <svg width="11" height="11" viewBox="0 0 11 11">
    <path d="M0 6l4-4h1v3h2l1 2-3.500 4z" fill="#989898" /><path d="M8 0v6M5.500 3H11" stroke="#989898" strokeWidth="1.200" />
  </svg>
);

const Diamond = () => (
  <svg width="16" height="16" viewBox="0 0 16 16">
    <path d="M8 1.500L14.500 8 8 14.500 1.500 8z" fill="none" stroke="#fff" strokeWidth="1.500" /><path d="M8 1.500v4.500H6v4h2v4.500L1.500 8z" fill="#fff" />
  </svg>
);

const Spin = () => (
  <svg width="9" height="9" viewBox="0 0 9 9"><path d="M3.500 0H9v5.500zM0 3.500V9h5.500z" fill="#111" /></svg>
);

type Kind = "border" | "button" | "check" | "image" | "slot" | "progress" | "slider" | "text" | "textbox" | "canvas" | "hbox" | "dot";

const WidgetIcon = ({ kind, on }: { kind: Kind; on?: boolean }) => {
  const k = "#a3a3a3";
  const art: Record<Kind, React.ReactNode> = {
    border: <rect x="2.500" y="4.500" width="11" height="7" rx="2" />,
    button: <><rect x="2" y="4" width="12" height="8" fill={on ? "#d3b35a" : "#8d8d8d"} stroke="none" /><path d="M2 4h12v4H2z" fill={on ? "#ecd28a" : "#a8a8a8"} stroke="none" /></>,
    check: <><path d="M11 3.500H3.500v9h8V9" strokeWidth="1.200" strokeDasharray="3 1" /><path d="M5 6l3 4.500L13 4" strokeWidth="1.800" /></>,
    image: <><rect x="2.500" y="2.500" width="11" height="11" /><circle cx="8" cy="6.500" r="2.500" /><path d="M8 6v5M5 11.500h6" /></>,
    slot: <><rect x="1.500" y="2.500" width="13" height="11" /><path d="M8 5v6M5.500 6.500l5 3M10.500 6.500l-5 3" /></>,
    progress: <><rect x="0.500" y="4.500" width="15" height="7" rx="3.500" /><path d="M2 6h5v4H2z" fill={k} stroke="none" /></>,
    slider: <><path d="M1 3h5v4L3.500 9 1 7z" fill={k} stroke="none" /><path d="M1 9.500h14" strokeWidth="2" /></>,
    text: <><rect x="3.500" y="3.500" width="9" height="9" /><path d="M5.500 6h5M8 6v5" strokeWidth="1.600" /></>,
    textbox: <><rect x="2.500" y="4.500" width="11" height="7" /><path d="M5 6.500v3" /></>,
    canvas: <><rect x="2.500" y="2.500" width="11" height="11" /><path d="M4.500 5.500h6v3h-6z" /></>,
    hbox: <><rect x="2.500" y="4.500" width="11" height="8" /><path d="M5 7h2v3H5zM9 7h2v3H9z" /></>,
    dot: <path d="M8 5.500l3 3-3 3-3-3z" fill={k} stroke="none" />,
  };
  return <svg width="16" height="16" viewBox="0 0 16 16" fill="none" stroke={k}>{art[kind]}</svg>;
};

const petal = "M-2.500-8L2.500-8 7-31-7-31z";
const leaf = "M-23-23h10l8.500 14.500-3 3L-23-14z";
const Pinwheel = () => (
  <svg width="64" height="64" viewBox="-32 -32 64 64" fill="#fff" stroke="#000" strokeWidth="1.300">
    {[0, 90, 180, 270].map((a) => (
      <g key={a} transform={`rotate(${a})`}><path d={petal} /><path d={leaf} /></g>
    ))}
    <circle r="6.500" />
  </svg>
);

const ResizeArrow = () => (
  <svg width="18" height="18" viewBox="0 0 18 18">
    <path d="M3 3l12 12" stroke="#fff" strokeWidth="2.500" strokeDasharray="7 1 2 1" /><path d="M0 0h7L0 7zM17 17h-7l7-7z" fill="#fff" />
  </svg>
);

const Gear = () => (
  <svg width="17" height="17" viewBox="0 0 17 17" fill="#a9bbe8">
    {teeth(8.5, 8.5, 8.5, 8)}<circle cx="8.500" cy="8.500" r="5" fill="#252525" stroke="#a9bbe8" strokeWidth="2" />
  </svg>
);

/* ---------- data ---------- */

const menus = ["File", "Edit", "Asset", "View", "Debug", "Window", "Help"];

const common: [string, Kind][] = [
  ["Border", "border"], ["Button", "button"], ["Check Box", "check"], ["Image", "image"], ["Named Slot", "slot"],
  ["Progress Bar", "progress"], ["Slider", "slider"], ["Text", "text"], ["Text Box", "textbox"],
];

const tree: { label: string; kind: Kind; arrow?: boolean; on?: boolean }[] = [
  ...Array.from({ length: 5 }, () => ({ label: "[Border]", kind: "border" as Kind, arrow: true })),
  { label: "[Horizontal Box]", kind: "hbox", arrow: true },
  { label: "Image_117", kind: "image" },
  { label: "[Background Blur]", kind: "dot" },
  { label: "Button_95", kind: "button", on: true },
  { label: "Button_96", kind: "button" },
];

const directions = ["Left", "Right", "Up", "Down", "Next", "Previous"];
const events = ["OnClicked", "OnPressed", "OnReleased", "OnHovered", "OnUnhovered"];
const handles = [[393, 417], [428, 417], [463, 417], [393, 449], [463, 449], [393, 481], [428, 481], [463, 481]];

/* ---------- pieces ---------- */

const PanelTab = ({ icon, title, idle, focus }: { icon: React.ReactNode; title: string; idle?: boolean; focus?: boolean }) => (
  <Tab $idle={idle} $focus={focus}>
    {icon}<span>{title}</span>
    <CloseButton aria-label={`Close ${title}`}><XIcon /></CloseButton>
  </Tab>
);

const Search = ({ hint, m }: { hint: string; m?: string }) => (
  <SearchField $m={m}><input type="text" placeholder={hint} aria-label={hint} /><Magnifier /></SearchField>
);

const TreeTools = () => (
  <>
    <IconButton aria-label="Toggle lock"><Lock /></IconButton>
    <IconButton aria-label="Toggle visibility"><Eye /></IconButton>
  </>
);

const Heading = ({ children }: { children: string }) => (
  <CategoryHead><OpenArrow />{children}</CategoryHead>
);

const Toolbar = () => (
  <ToolbarArea>
    <TabStrip><PanelTab icon={<Wrench />} title="Toolbar" /></TabStrip>
    <ToolbarBar>
      <ToolGroup>
        <ToolButton $w={56}><CompileIcon />Compile</ToolButton>
        <CaretButton aria-label="Compile options"><Caret fill="#c8c8c8" /></CaretButton>
        <ToolDivider />
        <ToolButton $w={53}><SaveIcon />Save</ToolButton>
        <ToolButton $w={69}><FindIcon />Find in CB</ToolButton>
        <ToolDivider />
        <ToolButton $w={101}><ReflectorIcon />Widget Reflector</ToolButton>
        <ToolDivider />
        <ToolButton $w={52}><PlayIcon />Play</ToolButton>
        <CaretButton aria-label="Play options"><Caret fill="#c8c8c8" /></CaretButton>
        <DebugFilter>
          <SelectBox $h={22} $flat>
            <select id="debug-filter"><option>No debug object selected</option></select><Caret />
          </SelectBox>
          <label htmlFor="debug-filter">Debug Filter</label>
        </DebugFilter>
      </ToolGroup>
      <Modes>
        <ModeButton $on><DesignerIcon />Designer</ModeButton>
        <svg width="9" height="20" viewBox="0 0 9 20"><path d="M1 1l6 9-6 9" fill="none" stroke="#a5a5a5" strokeWidth="1.500" /></svg>
        <ModeButton><GraphIcon />Graph</ModeButton>
      </Modes>
    </ToolbarBar>
  </ToolbarArea>
);

const PalettePanel = () => (
  <Panel $h={312}>
    <TabStrip><PanelTab icon={<PaletteIcon />} title="Palette" /></TabStrip>
    <PanelBody>
      <PaletteTop><Search hint="Search Palette" /></PaletteTop>
      <PaletteScroll>
        <PaletteList>
          <li>
            <PaletteHead><OpenArrow />Common</PaletteHead>
            <ul>
              {common.map(([name, kind]) => (
                <li key={name}><PaletteItem $on={name === "Button"}><WidgetIcon kind={kind} />{name}</PaletteItem></li>
              ))}
            </ul>
          </li>
          {["Extra", "Input", "Optimization"].map((n) => (
            <li key={n}><PaletteHead><ShutArrow />{n}</PaletteHead></li>
          ))}
        </PaletteList>
        <Gutter><Thumb $h={197} /></Gutter>
      </PaletteScroll>
    </PanelBody>
    <Marker $x={11} $y={83} $w={183} $h={31} />
  </Panel>
);

const HierarchyPanel = () => (
  <Panel>
    <TabStrip><PanelTab icon={<HierarchyIcon />} title="Hierarchy" focus /></TabStrip>
    <PanelBody>
      <Search hint="Search Widgets" m="6px 6px 4px" />
      <ul>
        <TreeRow $indent={0} $root><OpenArrow /><TreeLabel>[W_WeaponInventory_UI]</TreeLabel></TreeRow>
        <TreeRow $indent={10}>
          <OpenArrow /><WidgetIcon kind="canvas" /><TreeLabel>[Canvas Panel]</TreeLabel><TreeTools />
        </TreeRow>
        {tree.map((n, i) => (
          <TreeRow key={i} $indent={n.arrow ? 20 : 30} $on={n.on}>
            {n.arrow && <ShutArrow />}<WidgetIcon kind={n.kind} on={n.on} /><TreeLabel>{n.label}</TreeLabel><TreeTools />
          </TreeRow>
        ))}
      </ul>
    </PanelBody>
    <Marker $x={12} $y={205} $w={194} $h={52} />
  </Panel>
);

const Canvas = () => (
  <CanvasPanel>
    <FocusCorner />
    <TopRuler>
      {[0, 500, 1000, 1500, 2000].map((n) => <TopMark key={n} $at={127 + n / 2}>{n}</TopMark>)}
    </TopRuler>
    <LeftRuler>
      {[0, 500, 1000].map((n) => (
        <SideMark key={n} $at={27 + n / 2}>{String(n).split("").map((d, i) => <span key={i}>{d}</span>)}</SideMark>
      ))}
    </LeftRuler>
    <Viewport>
      <HudText $left={6} $top={3}>Zoom -2</HudText>
      <HudText $left={6} $bottom={2}>1280 x 720 (16:9)</HudText>
      <HudText $right={9} $bottom={2}>DPI Scale 0.67 <Gear /></HudText>
      <Design>
        <Placed $x={50} $y={95} $w={249} $h={26} $fill="#000" $dash><SlotTitle>EQUIPPED</SlotTitle></Placed>
        <Placed $x={50} $y={120} $w={249} $h={300} $fill="#353535" $dash>
          <InnerDash>
            <GameText>Accuracy:</GameText><GameText>Damage:</GameText><GameText>Ammo:</GameText>
            <RedText>Red Text</RedText>
          </InnerDash>
        </Placed>
        <Placed $x={557} $y={120} $w={99} $h={100} $fill="#353535" $dash>
          <GameButtons><GameButton>Equip</GameButton><GameButton>Drop</GameButton><GameButton $last>Close</GameButton></GameButtons>
        </Placed>
        <Placed $x={660} $y={95} $w={250} $h={26} $fill="#000" $dash><SlotTitle>BACKPACK</SlotTitle></Placed>
        <Placed $x={660} $y={120} $w={250} $h={300} $fill="#353535" $dash><InnerDash /></Placed>
        <Placed $x={52} $y={453} $w={242} $h={59} $fill="#353535" />
        <Placed $x={66} $y={475} $w={214} $h={20} $dash>
          <MoneyRow><GameText>Money :</GameText><GameText>999999</GameText></MoneyRow>
        </Placed>
        <Selected $x={396} $y={420} $w={66} $h={60}><GreyButton aria-label="Button_95" /></Selected>
        <Placed $x={471} $y={423} $w={58} $h={52}><GreyButton aria-label="Button_96" /></Placed>
        {handles.map(([x, y]) => <Handle key={`${x}-${y}`} $x={x} $y={y} />)}
        <Marker $x={362} $y={394} $w={205} $h={111} />
        <Floating $x={-32} $y={-32}><Pinwheel /></Floating>
        <Floating $x={962} $y={543}><ResizeArrow /></Floating>
      </Design>
      <CanvasTools>
        <ToolPill>
          <PillButton $on aria-label="Dashed outlines"><svg width="17" height="17"><rect x="1.500" y="1.500" width="14" height="14" fill="none" stroke="#d9b36c" strokeDasharray="2 1" /></svg></PillButton>
        </ToolPill>
        <ToolPill>
          <PillButton $on aria-label="Respect locks"><svg width="12" height="14" viewBox="0 0 12 14"><path d="M1 6h10v7H1z" fill="#2a1a03" /><path d="M3.500 6V3.500a2.500 2.500 0 015 0V6" fill="none" stroke="#2a1a03" strokeWidth="1.500" /></svg></PillButton>
        </ToolPill>
        <ToolPill>
          <PillButton $on aria-label="Layout transform"><svg width="15" height="13" viewBox="0 0 15 13" fill="#4b3c22"><rect width="4" height="13" rx="1" /><rect x="5" y="1" width="4" height="3" /><rect x="5" y="5" width="10" height="8" rx="2" /></svg></PillButton>
          <PillButton $dim>R</PillButton>
        </ToolPill>
        <ToolPill>
          <PillButton $on aria-label="Grid snap"><svg width="13" height="13"><path d="M.5.5h12v12H.5zM3.500 0v13M6.500 0v13M9.500 0v13M0 3.500h13M0 6.500h13M0 9.500h13" fill="none" stroke="#1a1204" /></svg></PillButton>
          <Stacked>4<Caret w={4} /></Stacked>
        </ToolPill>
        <ToolPill>
          <PillButton aria-label="Zoom to fit"><svg width="17" height="17" viewBox="0 0 17 17" fill="none" stroke="#555"><path d="M.5 4v9M16.500 4v9M5 .5h7M5 16.500h7M2 8.500h13M8.500 2v13M4 6.500l-2 2 2 2M13 6.500l2 2-2 2M6.500 4l2-2 2 2M6.500 13l2 2 2-2" /></svg></PillButton>
        </ToolPill>
        <ToolPill><PillButton $w={80}>Screen Size<Caret /></PillButton></ToolPill>
        <ToolPill><PillButton $w={74}>Fill Screen<Caret /></PillButton></ToolPill>
      </CanvasTools>
    </Viewport>
  </CanvasPanel>
);

const Details = () => (
  <Panel>
    <TabStrip><PanelTab icon={<InfoIcon />} title="Details" /></TabStrip>
    <DetailsBody>
      <NameRow>
        <svg width="12" height="9" viewBox="0 0 12 9"><path d="M0 0h12v9H0z" fill="#f0f0f0" /><path d="M1 5h10v3H1z" fill="#b5b5b5" /></svg>
        <NameInput defaultValue="Button_95" aria-label="Widget name" />
        <CheckLabel><Check type="checkbox" defaultChecked />Is Variable</CheckLabel>
        <DottedLink href="#">Open Button.h</DottedLink>
      </NameRow>
      <SearchRow>
        <Search hint="Search" />
        <MatrixButton aria-label="Property matrix">
          <svg width="14" height="14"><path d="M0 1.500h14M0 4.500h14M0 7.500h14M0 10.500h14M0 13.500h14" stroke="#555" strokeWidth="2" strokeDasharray="4 1" /></svg>
        </MatrixButton>
        <EyeMenu aria-label="View options">
          <svg width="17" height="11" viewBox="0 0 17 11"><path d="M0 5.500C4-.8 13-.8 17 5.500 13 11.800 4 11.800 0 5.500z" fill="#dfe4ea" /><circle cx="8.500" cy="5" r="3.600" fill="#6682ac" /><circle cx="8.500" cy="5" r="1.600" fill="#1c2636" /></svg>
          <Caret fill="#ddd" />
        </EyeMenu>
      </SearchRow>
      <DetailsScroll>
        <ClippedRow>
          <PropRow>
            <PropName><i /><label htmlFor="tooltip">Tool Tip Text</label></PropName>
            <PropValue><TextField id="tooltip" $w={175} /><DropButton $m={35}>Bind<Caret /></DropButton></PropValue>
          </PropRow>
        </ClippedRow>
        <Category $flush>
          <PropRow $h={27}>
            <PropName><i /><label htmlFor="visibility">Visibility</label><Tag /></PropName>
            <PropValue>
              <SelectBox $w={103} $h={19} $small><select id="visibility"><option>Visible</option></select><Caret /></SelectBox>
              <DropButton $m={19}>Bind<Caret /></DropButton>
            </PropValue>
          </PropRow>
          <Advanced aria-label="Show advanced"><svg width="10" height="8"><path d="M0 .5h10" stroke="#ddd" /><path d="M0 2h10L5 7z" fill="#ddd" /></svg></Advanced>
        </Category>
        <Category>
          <Heading>Clipping</Heading>
          <PropRow $h={26}>
            <PropName><i /><label htmlFor="clipping">Clipping</label><Tag /></PropName>
            <PropValue><SelectBox $w={103} $h={19} $small><select id="clipping"><option>Inherit</option></select><Caret /></SelectBox></PropValue>
          </PropRow>
        </Category>
        <Category>
          <Heading>Performance</Heading>
          <PropRow $h={24}>
            <PropName><i /><label htmlFor="volatile">Is Volatile</label></PropName>
            <PropValue><Check type="checkbox" id="volatile" /></PropValue>
          </PropRow>
        </Category>
        <Category>
          <Heading>Render Transform</Heading>
          <PropRow><PropName><ShutArrow /><span>Transform</span><Tag /></PropName><PropValue /></PropRow>
          <PropRow>
            <PropName><ShutArrow /><span>Pivot</span><Tag /></PropName>
            <PropValue>
              <Vector>X<input defaultValue="0.5" aria-label="Pivot X" /><Spin /></Vector>
              <Vector>Y<input defaultValue="0.5" aria-label="Pivot Y" /><Spin /></Vector>
            </PropValue>
          </PropRow>
        </Category>
        <Category>
          <Heading>Navigation</Heading>
          {directions.map((d) => (
            <PropRow key={d}>
              <PropName><i /><span>{d}</span></PropName>
              <PropValue><DropButton>Escape<Caret /></DropButton></PropValue>
            </PropRow>
          ))}
        </Category>
        <Category>
          <Heading>Events</Heading>
          {events.map((e, i) => (
            <PropRow key={e} $on={i === 0}>
              <EventName><Diamond /><span>{e}</span></EventName>
              <PropValue><GreenButton $w={150} $h={20} aria-label={`Add ${e}`}><Plus /></GreenButton></PropValue>
            </PropRow>
          ))}
        </Category>
        <DetailsThumb />
      </DetailsScroll>
    </DetailsBody>
    <Marker $x={-28} $y={489} $w={353} $h={47} />
  </Panel>
);

export default function App() {
  return (
    <Shell>
      <Global />
      <TitleBar>
        <TitleLeft>
          <Unreal />
          <DocTab><WidgetDoc /><span>W_WeaponInventory_UI*</span><CloseButton aria-label="Close document"><XIcon /></CloseButton></DocTab>
        </TitleLeft>
        <WindowControls>
          <CapIcon><GradCap /></CapIcon>
          <WinButton $w={25} aria-label="Minimize"><svg width="10" height="4"><path d="M0 0h10v3H0z" fill="#fff" /></svg></WinButton>
          <WinButton $w={22} aria-label="Restore"><svg width="10" height="8"><path d="M1 1h6v6H1zM3 0h6v5" fill="none" stroke="#fff" strokeWidth="1.500" /></svg></WinButton>
          <WinButton $w={32} aria-label="Close window"><svg width="10" height="8"><path d="M1 0l8 7M9 0L1 7" stroke="#fff" strokeWidth="2" /></svg></WinButton>
        </WindowControls>
      </TitleBar>
      <MenuBar>
        {menus.map((m) => <MenuItem key={m}>{m}</MenuItem>)}
        <ParentClass>Parent class: <DottedLink href="#">User Widget</DottedLink></ParentClass>
      </MenuBar>
      <Toolbar />
      <Workspace>
        <Column><PalettePanel /><HierarchyPanel /></Column>
        <Canvas />
        <Column><Details /></Column>
      </Workspace>
      <Bottom>
        <Panel>
          <TabStrip><PanelTab icon={<KeyIcon />} title="Animations" /></TabStrip>
          <PanelBody $pad="4px 5px 0 4px">
            <AnimBar>
              <GreenButton $w={82} $h={22}><Plus s={10} />Animation</GreenButton>
              <Search hint="Search Animations" />
            </AnimBar>
          </PanelBody>
        </Panel>
        <Panel>
          <TabStrip><PanelTab icon={<ClipIcon />} title="Timeline" idle /><PanelTab icon={<CompilerIcon />} title="Compiler Results" /></TabStrip>
          <LogPanel $pad="4px 0 0 4px">
            <Log />
            <LogFooter><button>Clear</button></LogFooter>
          </LogPanel>
        </Panel>
      </Bottom>
      <TaskBar>
        <Task $bg="#2e2e2e"><svg width="182" height="5"><circle cx="28" cy="14" r="13.500" fill="#a9c7dd" /><circle cx="151" cy="10" r="8" fill="#c2403a" /></svg></Task>
        <Task $bg="#4b4b4b" /><Task $bg="#1c1c1c" />
        <Task $bg="#4b4b4b"><svg width="60" height="5"><circle cx="24" cy="8" r="7" fill="#9a9a9a" /></svg></Task>
        <Task $bg="#6c6c6c"><svg width="60" height="5"><circle cx="26" cy="8" r="7" fill="#b5b5b5" /></svg></Task>
        <Task $bg="#393939" />
      </TaskBar>
    </Shell>
  );
}
